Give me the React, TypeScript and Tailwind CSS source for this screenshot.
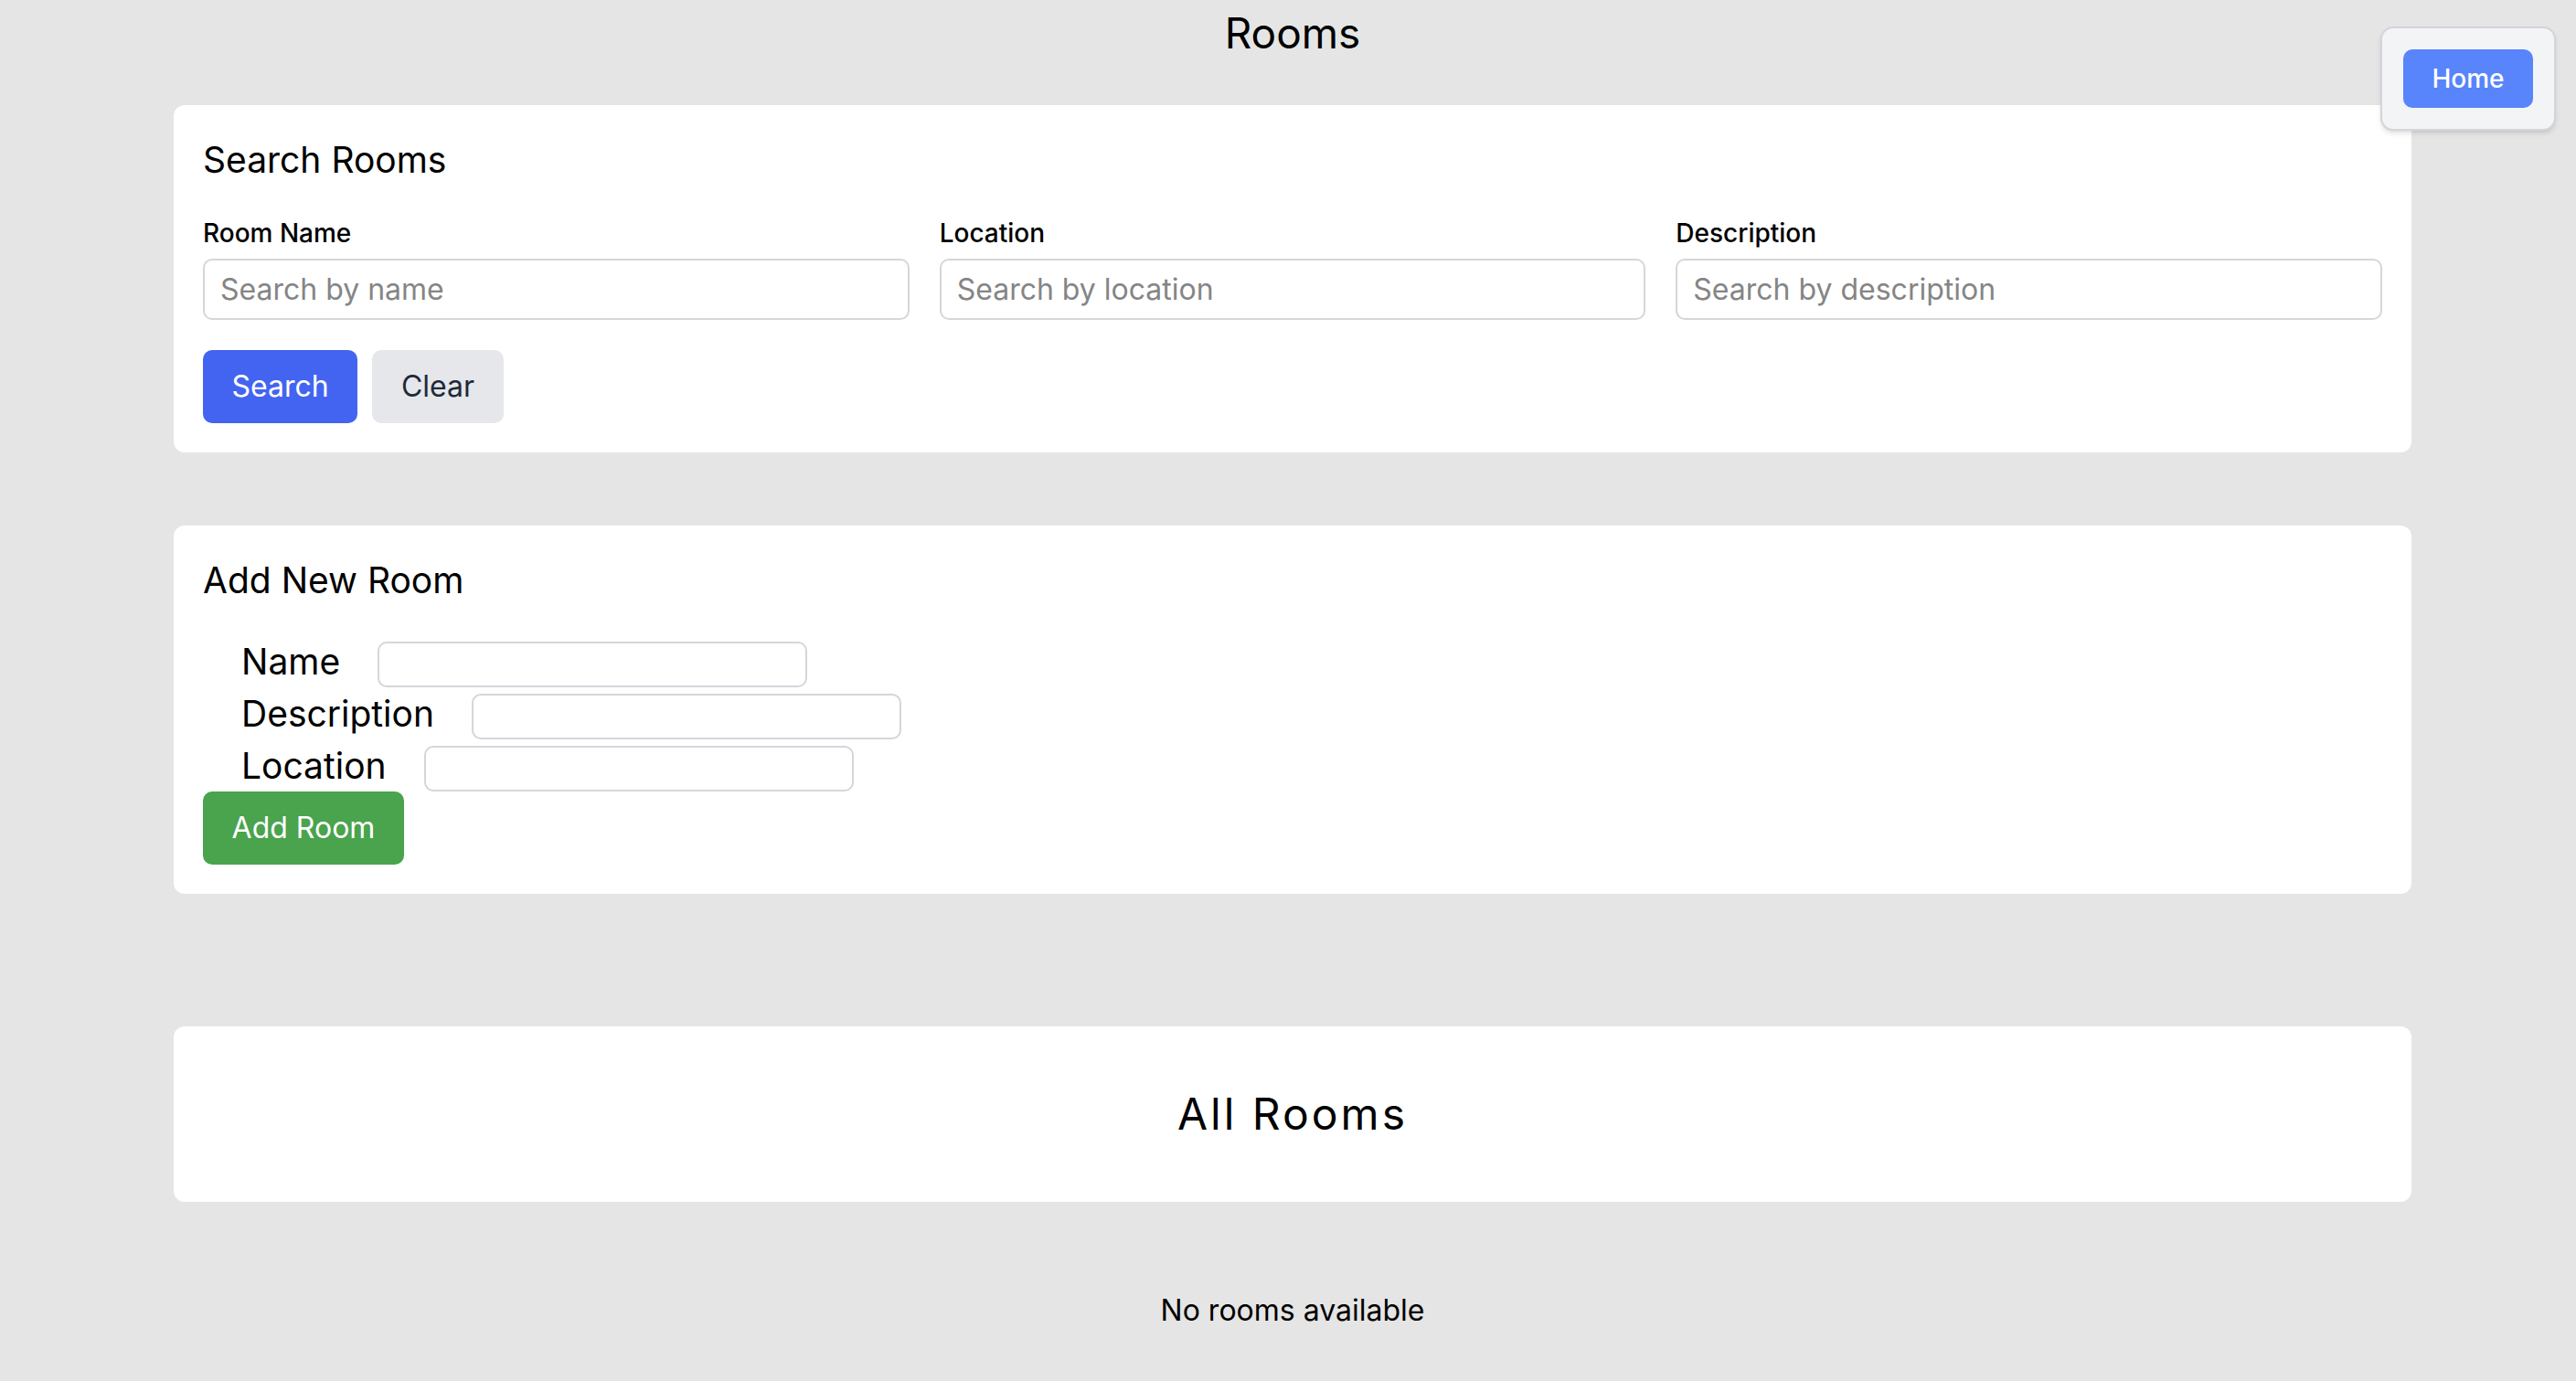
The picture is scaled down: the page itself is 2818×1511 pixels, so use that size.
import React from "react";

export default function App() {
  const font = { fontFamily: "Inter, 'Noto Sans', sans-serif" };
  return (
    <div className="min-h-[1511px] bg-[#e5e5e5] text-black relative" style={font}>
      <div className="absolute top-[29px] right-[22px] z-10 rounded-[14px] border-2 border-[#d4d5db] bg-[#f3f4f6] p-[23px] shadow-md">
        <button className="h-[64px] w-[142px] rounded-[10px] bg-[#5884fc] text-[28px] font-medium text-white">
          Home
        </button>
      </div>

      <div className="ml-[190px] mr-[180px] flex flex-col">
        <h1 className="text-center text-[46px] leading-[72px] font-normal">Rooms</h1>

        <div className="mt-[43px] rounded-[12px] bg-white p-[32px]">
          <h2 className="text-[39px] leading-[56px] font-normal">Search Rooms</h2>
          <div className="mt-[32px] grid grid-cols-3 gap-[33px]">
            {[
              ["Room Name", "Search by name"],
              ["Location", "Search by location"],
              ["Description", "Search by description"],
            ].map(([label, ph]) => (
              <div key={label} className="flex flex-col">
                <label className="text-[28px] leading-[40px] font-medium">{label}</label>
                <input
                  placeholder={ph}
                  className="mt-[8px] h-[67px] rounded-[10px] border-2 border-[#d4d6db] px-[17px] text-[32px] placeholder:text-[#858585] outline-none"
                  style={font}
                />
              </div>
            ))}
          </div>
          <div className="mt-[33px] flex gap-[16px]">
            <button className="h-[80px] w-[169px] rounded-[10px] bg-[#4364f0] text-[32px] text-white">Search</button>
            <button className="h-[80px] w-[144px] rounded-[10px] bg-[#e5e7eb] text-[32px] text-[#1f2937]">Clear</button>
          </div>
        </div>

        <div className="mt-[80px] rounded-[12px] bg-white p-[32px]">
          <h2 className="text-[39px] leading-[56px] font-normal">Add New Room</h2>
          <div className="mt-[32px] flex flex-col pl-[42px]">
            {["Name", "Description", "Location"].map((l) => (
              <div key={l} className="flex h-[57px] items-center">
                <span className="text-[39px] leading-[57px]">{l}</span>
                <input className="ml-[41px] mt-[7px] h-[50px] w-[470px] rounded-[10px] border-2 border-[#d4d6db] outline-none" />
              </div>
            ))}
          </div>
          <button className="h-[80px] w-[220px] rounded-[10px] bg-[#4aa34d] text-[32px] text-white">Add Room</button>
        </div>

        <div className="mt-[145px] flex h-[192px] items-center justify-center rounded-[12px] bg-white">
          <h2 className="text-[48px] tracking-[3px] font-normal">All Rooms</h2>
        </div>

        <p className="mt-[95px] text-center text-[32px] leading-[48px]">No rooms available</p>
      </div>
    </div>
  );
}
